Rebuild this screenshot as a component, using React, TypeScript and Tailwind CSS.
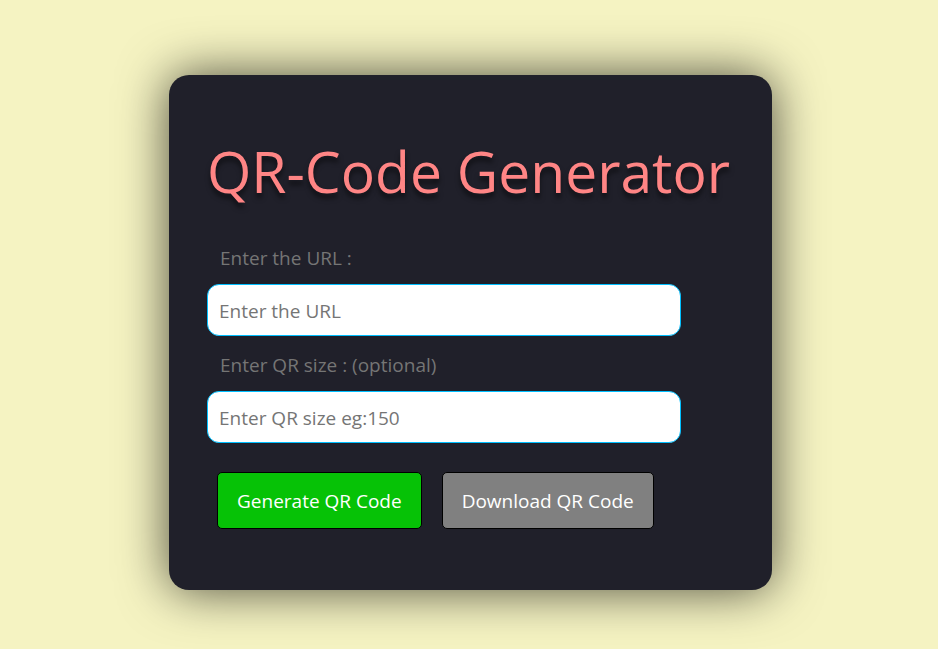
export default function App() {
  const input =
    "block h-[52px] w-[474px] max-w-full rounded-xl border border-[#00bfff] bg-white px-[11px] pt-0.5 text-[19px] text-black placeholder:text-[#757575] outline-none";
  const label = "block pl-[13px] text-[19px] leading-[27px] text-[#757575]";
  const button =
    "h-[57px] rounded-[5px] border border-black px-[19px] pt-0.5 text-[19px] text-white whitespace-nowrap";
  return (
    <main className="flex min-h-screen justify-center bg-[#f5f3c2] pt-[75px] pb-[59px] font-['Open_Sans','Noto_Sans',sans-serif]">
      <section className="ml-[3px] w-[603px] self-start rounded-[20px] bg-[#20202a] px-[38px] pt-[52px] pb-[61px] shadow-[0_0_50px_rgba(0,0,0,0.7)]">
        <h1 className="text-[57px] leading-[88px] whitespace-nowrap text-[#ff8585] [text-shadow:0_5px_5px_rgba(0,0,0,0.5)]">
          QR-Code Generator
        </h1>
        <form className="pt-[30px]" onSubmit={(e) => e.preventDefault()}>
          <label htmlFor="url" className={label}>Enter the URL :</label>
          <input id="url" type="text" placeholder="Enter the URL" className={`mt-3 ${input}`} />
          <label htmlFor="size" className={`mt-4 ${label}`}>Enter QR size : (optional)</label>
          <input id="size" type="text" placeholder="Enter QR size eg:150" className={`mt-3 ${input}`} />
          <div className="mt-[29px] flex gap-5 pl-[10px]">
            <button type="submit" className={`bg-[#06c206] ${button}`}>Generate QR Code</button>
            <button type="button" className={`bg-[#808080] ${button}`}>Download QR Code</button>
          </div>
        </form>
      </section>
    </main>
  );
}
